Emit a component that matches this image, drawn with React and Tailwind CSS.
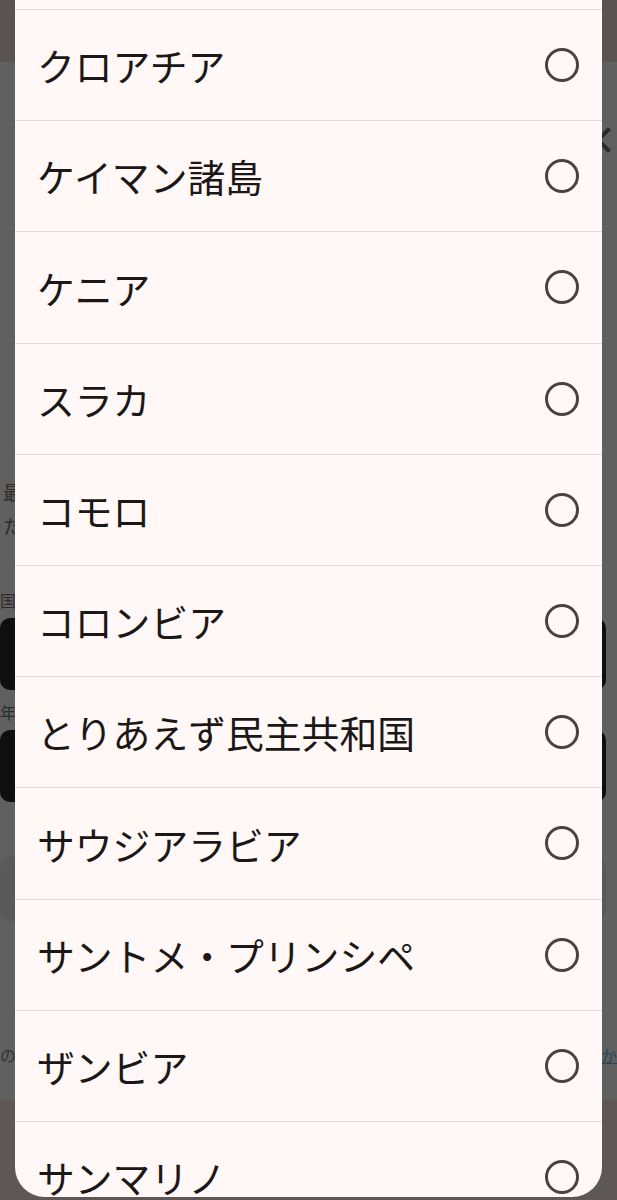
import React from "react";

const items = [
  "クック諸島",
  "クロアチア",
  "ケイマン諸島",
  "ケニア",
  "スラカ",
  "コモロ",
  "コロンビア",
  "とりあえず民主共和国",
  "サウジアラビア",
  "サントメ・プリンシペ",
  "ザンビア",
  "サンマリノ",
];

export default function App() {
  return (
    <div className="relative w-[617px] h-[1200px] overflow-hidden bg-[#606060] font-['Noto_Sans_CJK_JP',sans-serif]">
      {/* dimmed page underneath */}
      <div className="flex flex-col w-[606px]">
        <div className="h-[62px] w-[617px] bg-[#5a5351]" />
        <div className="mt-[65px] flex justify-end -mr-[5px]">
          <svg width="26" height="26" viewBox="0 0 26 26" fill="none" stroke="#2b2b2b" strokeWidth="4" strokeLinecap="square">
            <path d="M3 3 L23 23 M23 3 L3 23" />
          </svg>
        </div>
        <p className="mt-[322px] pl-[3px] text-[19px] leading-[34px] text-[#2c2c2c]">
          最新の情報をお届けするため、以下の項目をご入力ください。<br />
          ただし、入力は任意です。
        </p>
        <div className="mt-[47px] text-[16px] leading-[20px] text-[#2c2c2c]">国</div>
        <div className="mt-[8px] h-[72px] rounded-[10px] bg-[#0f0f0f]" />
        <div className="mt-[12px] text-[16px] leading-[20px] text-[#2c2c2c]">年</div>
        <div className="mt-[8px] h-[72px] rounded-[10px] bg-[#0f0f0f]" />
        <div className="mt-[54px] h-[65px] rounded-[12px] bg-[#595959]" />
        <div className="mt-[124px] flex w-[617px] justify-between text-[16px] leading-[20px] text-[#333]">
          <span>の</span>
          <span className="text-[#23465a] underline">か</span>
        </div>
      </div>
      <div className="absolute left-0 right-0 top-[1100px] h-[100px] bg-[#5d5755]" />

      {/* dialog */}
      <div className="absolute left-[15px] w-[587px] top-[-102.2px] h-[1298.7px] overflow-hidden rounded-b-[30px] bg-[#fff8f6]">
        <div className="flex flex-col">
          {items.map((label) => (
            <div
              key={label}
              className="flex h-[111.2px] shrink-0 items-center justify-between border-t-[1.5px] border-[#e2dad7] pl-[22px] pr-[23px]"
            >
              <span className="text-[37.8px] leading-none text-[#1c1717]">{label}</span>
              <span className="h-[34px] w-[34px] rounded-full border-[3px] border-[#4a4242]" />
            </div>
          ))}
        </div>
      </div>
    </div>
  );
}
